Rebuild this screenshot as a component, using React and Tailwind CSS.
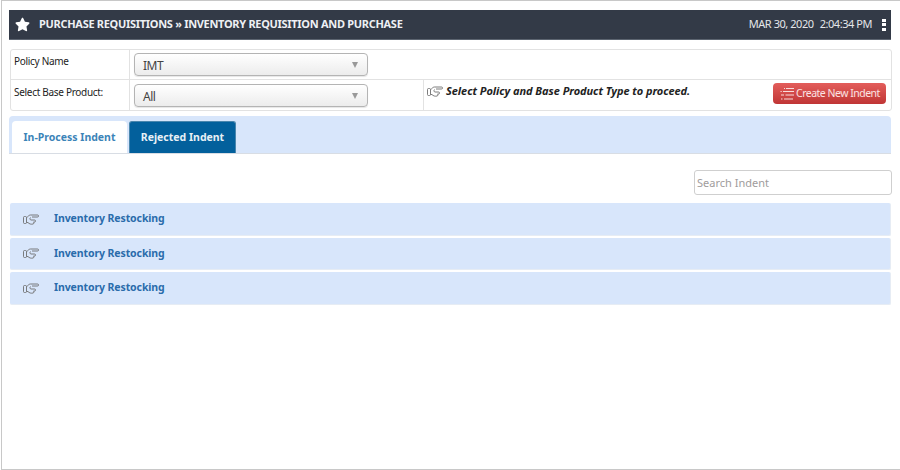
import { FaStar } from 'react-icons/fa';

const rows = ['Inventory Restocking', 'Inventory Restocking', 'Inventory Restocking'];

function SelectBox({ value }) {
  return (
    <div className="flex h-[23px] w-[234px] items-center justify-between rounded-[4px] border border-[#b4b4b4] bg-gradient-to-b from-white to-[#ececec] pl-[8px] pr-[9px] pt-[2px] text-[12px] tracking-[-0.5px] text-[#444] shadow-[0_1px_1px_rgba(0,0,0,0.1)]">
      <span>{value}</span>
      <span className="mb-[2px] h-0 w-0 border-x-[3.5px] border-t-[6px] border-x-transparent border-t-[#999]" />
    </div>
  );
}

function ListIcon() {
  return (
    <svg width="15" height="14" viewBox="0 0 15 14" className="shrink-0" stroke="#f8dcdc" strokeWidth="1.1" fill="none">
      <path d="M6 1.5h8M4 1.5h1M3 4.5h11M0.5 4.5h1.2M1 8h3M5.5 8h8.5M1 12h1.5M4 12h9" />
    </svg>
  );
}

function HandIcon({ className }) {
  return (
    <svg width="16" height="11" viewBox="0 0 16 11" className={className} stroke="#6e6e6e" strokeWidth="0.9" fill="none">
      <rect x="0.5" y="2.5" width="3" height="7" rx="1" />
      <path d="M3.5 3.5C5 3 5.5 1 7.5 1H14.5a1 1 0 0 1 0 2H9" />
      <path d="M3.5 8.5H5C6 10 8.5 10.5 10 10s1-1.5.5-2H11.5a1 1 0 0 0 0-2H11" />
      <path d="M7.5 3.5C6.5 4.5 7 6 8 6h3" />
    </svg>
  );
}

export default function App() {
  return (
    <div className="h-[470px] w-[900px] overflow-hidden bg-white font-['Noto_Sans','DejaVu_Sans',sans-serif]">
      <div className="ml-px h-full border-y border-l border-[#c8c8c8] pl-[7px] pt-[9px]">
        <header className="flex h-[30px] w-[882px] items-center justify-between border-b border-[#5c6470] bg-[#333a47] pl-[6px] pr-[5px] text-white">
          <div className="flex items-center">
            <FaStar className="mr-[9px] text-[15px]" />
            <span className="text-[11px] font-bold tracking-[-0.3px] text-[#eef0f4]">PURCHASE REQUISITIONS » INVENTORY REQUISITION AND PURCHASE</span>
          </div>
          <div className="flex items-center text-[11px] tracking-[-0.45px] text-[#e4e6ea]">
            <span className="mr-[6px]">MAR 30, 2020</span>
            <span className="mr-[10px]">2:04:34 PM</span>
            <span className="flex flex-col gap-[1.5px]">
              <i className="block h-[3px] w-[4px] bg-white" />
              <i className="block h-[3px] w-[4px] bg-white" />
              <i className="block h-[3px] w-[4px] bg-white" />
            </span>
          </div>
        </header>

        <section className="ml-px mt-[9px] h-[62px] w-[882px] rounded-[3px] border border-[#e2e2e2] text-[10px] tracking-[-0.3px] text-[#222]">
          <div className="flex h-[30px] border-b border-[#e2e2e2]">
            <div className="w-[119px] border-r border-[#e2e2e2] pl-[3px] pt-[4px]">Policy Name</div>
            <div className="pl-[4px] pt-[3px]">
              <SelectBox value="IMT" />
            </div>
          </div>
          <div className="flex h-[30px]">
            <div className="w-[119px] border-r border-[#e2e2e2] pl-[3px] pt-[5px]">Select Base Product:</div>
            <div className="w-[294px] border-r border-[#e2e2e2] pl-[4px] pt-[4px]">
              <SelectBox value="All" />
            </div>
            <div className="flex flex-1 items-start justify-between pl-[3px] pr-[5px]">
              <div className="flex items-center pt-[3px] text-[11px] font-bold italic tracking-[-0.05px] text-[#222]">
                <HandIcon className="mr-[3px] shrink-0" />
                Select Policy and Base Product Type to proceed.
              </div>
              <button className="mt-[3px] flex h-[21px] w-[113px] items-center gap-px whitespace-nowrap rounded-[4px] bg-gradient-to-b from-[#e35d5b] to-[#c03535] pl-[7px] text-[10.5px] tracking-[-0.5px] text-[#fbe3e3]">
                <ListIcon />
                Create New Indent
              </button>
            </div>
          </div>
        </section>

        <nav className="mt-[5px] flex h-[38px] w-[882px] items-end gap-[2px] rounded-t-[4px] border-b border-[#d8dde4] bg-[#d8e6fb] pl-[3px]">
          <div className="flex h-[32px] w-[115px] items-center justify-center rounded-t-[4px] bg-white pt-[1px] text-[10.5px] font-bold text-[#3c84b8]">In-Process Indent</div>
          <div className="flex h-[32px] w-[107px] items-center justify-center rounded-t-[3px] border border-b-0 border-[#4a86ad] bg-[#03609c] pt-[1px] text-[10.5px] font-bold text-[#e8f0f6]">Rejected Indent</div>
        </nav>

        <div className="mt-[16px] flex w-[883px] justify-end">
          <input readOnly placeholder="Search Indent" className="h-[25px] w-[198px] rounded-[3px] border border-[#cfcfcf] pl-[2px] text-[11px] outline-none placeholder:text-[#a09c9c]" />
        </div>

        <ul className="ml-px mt-[8px] flex w-[881px] flex-col gap-[2px]">
          {rows.map((r, i) => (
            <li key={i} className="flex h-[32.5px] items-center rounded-[2px] border-r border-b border-[#e6ecf4] bg-[#d8e6fb] pt-[1px]">
              <HandIcon className="ml-[13px] mr-[15px] shrink-0" />
              <span className="text-[10.5px] font-bold tracking-[-0.1px] text-[#2a6cab]">{r}</span>
            </li>
          ))}
        </ul>
      </div>
    </div>
  );
}
